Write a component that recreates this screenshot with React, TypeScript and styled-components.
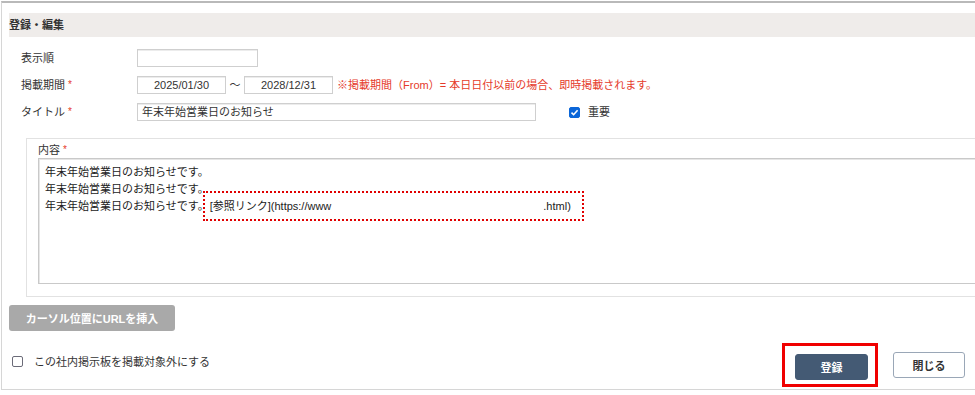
import React from 'react';
import styled, { createGlobalStyle } from 'styled-components';

const GlobalStyle = createGlobalStyle`
  html, body {
    margin: 0;
    padding: 0;
    background: #fff;
    overflow: hidden;
  }
  body {
    font-family: 'Liberation Sans', 'Noto Sans CJK JP', sans-serif;
    font-size: 11px;
    color: #333;
  }
`;

/** 外枠 */
const Panel = styled.div`
  width: 1000px;
  height: 376px;
  margin: 1px 0 0 1px;
  padding: 10px 0 0 7px;
  border-top: 2px solid #b9b9b9;
  border-left: 1px solid #d6d6d6;
  border-bottom: 1px solid #d6d6d6;
  box-sizing: content-box;
`;

const PanelTitle = styled.div`
  height: 24px;
  line-height: 24px;
  background: #efecea;
  font-weight: 700;
  font-size: 11px;
  color: #333;
`;

const Form = styled.div`
  display: flex;
  flex-direction: column;
  gap: 9px;
  padding: 12px 0 0 12px;
`;

const Row = styled.div`
  display: flex;
  align-items: center;
  height: 18px;
  line-height: 18px;
`;

const Label = styled.div`
  width: 116px;
  flex: none;
  font-size: 11px;
`;

const Required = styled.span`
  color: #e53a2a;
  font-size: 10px;
  margin-left: 3px;
  vertical-align: 1px;
`;

const TextBox = styled.div<{ $w: number; $center?: boolean }>`
  width: ${(p) => p.$w}px;
  height: 18px;
  box-sizing: border-box;
  border: 1px solid #cfcfcf;
  box-shadow: inset 0 1px 0 #ececec;
  background: #fff;
  padding: 0 4px;
  line-height: 16px;
  font-size: 11px;
  text-align: ${(p) => (p.$center ? 'center' : 'left')};
  color: #333;
`;

const Tilde = styled.span`
  width: 18px;
  text-align: center;
  font-size: 11px;
`;

const Note = styled.span`
  color: #e53a2a;
  margin-left: 4px;
  font-size: 11px;
`;

const CheckLabel = styled.label`
  display: flex;
  align-items: center;
  gap: 8px;
  margin-left: 33px;
  font-size: 11px;
`;

const Check = styled.span<{ $on?: boolean }>`
  width: 11px;
  height: 11px;
  box-sizing: border-box;
  border-radius: 2px;
  display: inline-flex;
  align-items: center;
  justify-content: center;
  background: ${(p) => (p.$on ? '#0b66d8' : '#fff')};
  border: 1px solid ${(p) => (p.$on ? '#0b66d8' : '#6b6b78')};
`;

/** 内容 */
const ContentBox = styled.div`
  margin: 17px 0 0 17px;
  height: 159px;
  box-sizing: border-box;
  border: 1px solid #e2e2e2;
  padding: 2px 0 12px 11px;
  display: flex;
  flex-direction: column;
`;

const ContentLabel = styled.div`
  height: 17px;
  line-height: 17px;
  font-size: 11px;
`;

const TextArea = styled.div`
  position: relative;
  flex: 1;
  border: 1px solid #c9c9c9;
  box-shadow: inset 1px 1px 0 #e6e6e6;
  padding: 5px 0 0 6px;
  line-height: 17px;
  font-size: 11px;
  color: #222;
`;

const LinkText = styled.span`
  margin-left: 1px;
`;

const LinkTail = styled.span`
  margin-left: 212px;
`;

const DottedMark = styled.div`
  position: absolute;
  left: 164px;
  top: 32px;
  width: 381px;
  height: 30px;
  box-sizing: border-box;
  border: 2px dotted #e00000;
`;

const InsertButton = styled.button`
  display: block;
  margin-top: 8px;
  width: 166px;
  height: 26px;
  border: none;
  border-radius: 3px;
  background: #a9a9a9;
  color: #fff;
  font-family: inherit;
  font-weight: 700;
  font-size: 11px;
`;

const Footer = styled.div`
  display: flex;
  align-items: center;
  justify-content: space-between;
  width: 967px;
  height: 44px;
  margin-top: 12px;
`;

const ExcludeLabel = styled.label`
  display: flex;
  align-items: center;
  gap: 11px;
  margin: 0 0 8px 3px;
  font-size: 11px;
`;

const Actions = styled.div`
  display: flex;
  align-items: center;
  gap: 15px;
  padding-right: 11px;
`;

const Highlight = styled.div`
  width: 96px;
  height: 44px;
  box-sizing: border-box;
  border: 3px solid #f00000;
  padding: 8px 0 0 10px;
`;

const ActionButton = styled.button<{ $primary?: boolean }>`
  width: ${(p) => (p.$primary ? 73 : 72)}px;
  height: 26px;
  border-radius: 3px;
  font-family: inherit;
  font-weight: 700;
  font-size: 11px;
  background: ${(p) => (p.$primary ? '#445a74' : '#fff')};
  color: ${(p) => (p.$primary ? '#fff' : '#333')};
  border: 1px solid ${(p) => (p.$primary ? '#445a74' : '#9aa7b7')};
`;

const CheckMark = () => (
  <svg width="9" height="9" viewBox="0 0 9 9">
    <path d="M1.5 4.6 L3.6 6.7 L7.6 2.2" fill="none" stroke="#fff" strokeWidth="1.6" />
  </svg>
);

export default function App() {
  return (
    <>
      <GlobalStyle />
      <Panel>
        <PanelTitle>登録・編集</PanelTitle>
        <Form>
          <Row>
            <Label>表示順</Label>
            <TextBox $w={121} />
          </Row>
          <Row>
            <Label>
              掲載期間<Required>*</Required>
            </Label>
            <TextBox $w={89} $center>2025/01/30</TextBox>
            <Tilde>～</Tilde>
            <TextBox $w={89} $center>2028/12/31</TextBox>
            <Note>※掲載期間（From）= 本日日付以前の場合、即時掲載されます。</Note>
          </Row>
          <Row>
            <Label>
              タイトル<Required>*</Required>
            </Label>
            <TextBox $w={399}>年末年始営業日のお知らせ</TextBox>
            <CheckLabel>
              <Check $on>
                <CheckMark />
              </Check>
              重要
            </CheckLabel>
          </Row>
        </Form>
        <ContentBox>
          <ContentLabel>
            内容<Required>*</Required>
          </ContentLabel>
          <TextArea>
            <div>年末年始営業日のお知らせです。</div>
            <div>年末年始営業日のお知らせです。</div>
            <div>
              年末年始営業日のお知らせです。
              <LinkText>[参照リンク](https://www</LinkText>
              <LinkTail>.html)</LinkTail>
            </div>
            <DottedMark />
          </TextArea>
        </ContentBox>
        <InsertButton>カーソル位置にURLを挿入</InsertButton>
        <Footer>
          <ExcludeLabel>
            <Check />
            この社内掲示板を掲載対象外にする
          </ExcludeLabel>
          <Actions>
            <Highlight>
              <ActionButton $primary>登録</ActionButton>
            </Highlight>
            <ActionButton>閉じる</ActionButton>
          </Actions>
        </Footer>
      </Panel>
    </>
  );
}
